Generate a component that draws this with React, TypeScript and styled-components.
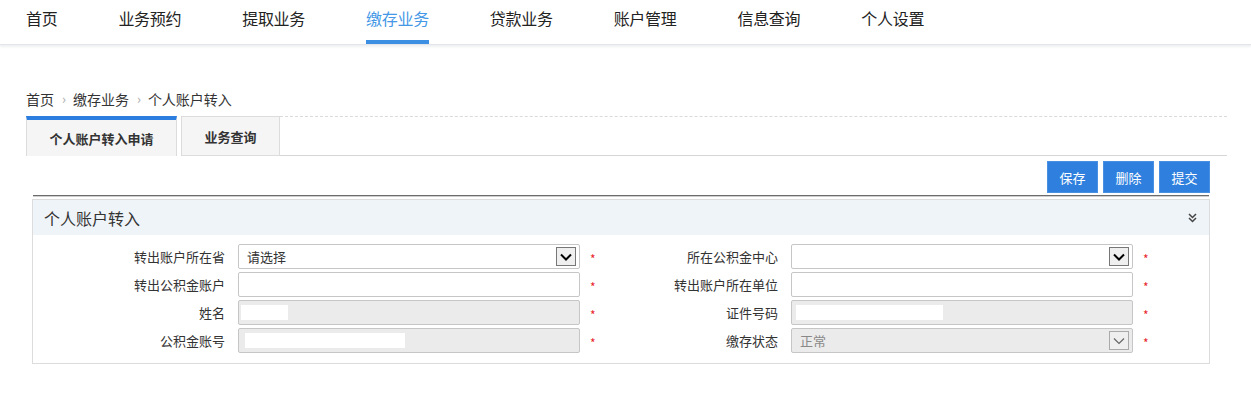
import styled, { createGlobalStyle } from "styled-components";

const GlobalStyle = createGlobalStyle`
  body {
    margin: 0;
    background: #fff;
    font-family: "Noto Sans CJK SC", "Liberation Sans", sans-serif;
    color: #333;
  }
`;

const navItems = ["首页", "业务预约", "提取业务", "缴存业务", "贷款业务", "账户管理", "信息查询", "个人设置"];

type Field = { label: string; kind: "select" | "text" | "readonly" | "readonlySelect"; value?: string; mask?: [number, number] };

const rows: [Field, Field][] = [
  [
    { label: "转出账户所在省", kind: "select", value: "请选择" },
    { label: "所在公积金中心", kind: "select" },
  ],
  [
    { label: "转出公积金账户", kind: "text" },
    { label: "转出账户所在单位", kind: "text" },
  ],
  [
    { label: "姓名", kind: "readonly", mask: [2, 47] },
    { label: "证件号码", kind: "readonly", mask: [4, 147] },
  ],
  [
    { label: "公积金账号", kind: "readonly", mask: [6, 160] },
    { label: "缴存状态", kind: "readonlySelect", value: "正常" },
  ],
];

const Chevron = ({ light }: { light?: boolean }) => (
  <svg width="12" height="8" viewBox="0 0 12 8">
    <path d="M1 1.5 L6 6.5 L11 1.5" fill="none" stroke={light ? "#666" : "#000"} strokeWidth={light ? 1.2 : 2} />
  </svg>
);

const DoubleDown = () => (
  <svg width="9" height="10" viewBox="0 0 9 10">
    <path d="M1 1 L4.5 4.5 L8 1 M1 5 L4.5 8.5 L8 5" fill="none" stroke="#444" strokeWidth="1.5" />
  </svg>
);

const FieldBox = ({ f }: { f: Field }) => {
  const ro = f.kind === "readonly" || f.kind === "readonlySelect";
  return (
    <Input $readonly={ro}>
      {f.mask && <Mask style={{ marginLeft: f.mask[0], width: f.mask[1] }} />}
      {f.value && <Value $muted={f.kind === "readonlySelect"}>{f.value}</Value>}
      {(f.kind === "select" || f.kind === "readonlySelect") && (
        <Arrow $light={f.kind === "readonlySelect"}>
          <Chevron light={f.kind === "readonlySelect"} />
        </Arrow>
      )}
    </Input>
  );
};

const App = () => {
  return (
    <>
      <GlobalStyle />
      <Nav>
        {navItems.map((n) => (
          <NavItem key={n} $active={n === "缴存业务"}>
            {n}
          </NavItem>
        ))}
      </Nav>
      <Main>
        <Crumbs>
          <span>首页</span>
          <Sep>›</Sep>
          <span>缴存业务</span>
          <Sep>›</Sep>
          <span>个人账户转入</span>
        </Crumbs>
        <Tabs>
          <Tab $active>个人账户转入申请</Tab>
          <Tab>业务查询</Tab>
          <TabFill />
        </Tabs>
        <Content>
          <Toolbar>
            <Button>保存</Button>
            <Button>删除</Button>
            <Button>提交</Button>
          </Toolbar>
          <Divider />
          <Panel>
            <PanelHead>
              <PanelTitle>个人账户转入</PanelTitle>
              <DoubleDown />
            </PanelHead>
            <FormGrid>
              {rows.map((r, i) =>
                r.map((f, j) => (
                  <FieldRow key={`${i}-${j}`} $right={j === 1}>
                    <Label>{f.label}</Label>
                    <FieldBox f={f} />
                    <Star>*</Star>
                  </FieldRow>
                ))
              )}
            </FormGrid>
          </Panel>
        </Content>
      </Main>
    </>
  );
};

const Nav = styled.div`
  display: flex;
  gap: 61px;
  padding-left: 26px;
  height: 44px;
  border-bottom: 1px solid #e3e5e9;
  box-shadow: 0 2px 2px #eef0f3;
`;
const NavItem = styled.div<{ $active?: boolean }>`
  font-size: 16px;
  line-height: 36px;
  color: ${(p) => (p.$active ? "#4498e6" : "#222")};
  border-bottom: 4px solid ${(p) => (p.$active ? "#3c8fe2" : "transparent")};
  letter-spacing: -0.3px;
`;
const Main = styled.div`
  margin: 0 24px 0 26px;
  padding-top: 44px;
`;
const Crumbs = styled.div`
  display: flex;
  align-items: center;
  font-size: 14px;
  line-height: 20px;
  color: #333;
  margin-bottom: 7px;
`;
const Sep = styled.span`
  color: #aaa;
  margin: 0 7px 0 8px;
  font-size: 13px;
`;
const Tabs = styled.div`
  display: flex;
  height: 40px;
  align-items: stretch;
`;
const Tab = styled.div<{ $active?: boolean }>`
  box-sizing: border-box;
  width: ${(p) => (p.$active ? "151px" : "99px")};
  margin-right: ${(p) => (p.$active ? "4px" : "0")};
  background: #f5f5f5;
  border: 1px solid #dcdcdc;
  border-top: ${(p) => (p.$active ? "4px solid #2b7de0" : "1px solid #dcdcdc")};
  border-bottom: ${(p) => (p.$active ? "none" : "1px solid #dcdcdc")};
  font-size: 13px;
  font-weight: bold;
  color: #333;
  display: flex;
  align-items: center;
  justify-content: center;
`;
const TabFill = styled.div`
  flex: 1;
  border-top: 1px dashed #dadada;
  border-bottom: 1px solid #d6d6d6;
`;
const Content = styled.div`
  padding: 0 17px 0 6px;
`;
const Toolbar = styled.div`
  display: flex;
  justify-content: flex-end;
  gap: 5px;
  margin-top: 5px;
`;
const Button = styled.div`
  width: 51px;
  height: 32px;
  background: #2f80de;
  border: 1px solid #4a90e2;
  box-sizing: border-box;
  color: #fff;
  font-size: 13px;
  display: flex;
  align-items: center;
  justify-content: center;
`;
const Divider = styled.div`
  margin: 2px 1px 0;
  height: 2px;
  background: #6b6b6b;
  border-bottom: 1px solid #cfcfcf;
  box-sizing: border-box;
`;
const Panel = styled.div`
  margin-top: 2px;
  border: 1px solid #dcdcdc;
`;
const PanelHead = styled.div`
  height: 35px;
  background: #eff4f8;
  display: flex;
  align-items: center;
  justify-content: space-between;
  padding: 0 12px 0 11px;
`;
const PanelTitle = styled.div`
  font-size: 16px;
  color: #333;
`;
const FormGrid = styled.div`
  display: grid;
  grid-template-columns: 588px 1fr;
  row-gap: 3px;
  padding: 9px 0 10px;
`;
const FieldRow = styled.div<{ $right?: boolean }>`
  display: grid;
  grid-template-columns: ${(p) => (p.$right ? "170px" : "205px")} 342px 1fr;
  align-items: center;
`;
const Label = styled.div`
  text-align: right;
  padding-right: 13px;
  font-size: 13px;
  color: #333;
`;
const Input = styled.div<{ $readonly?: boolean }>`
  height: 25px;
  box-sizing: border-box;
  border: 1px solid #c6c6c6;
  border-radius: 2px;
  background: ${(p) => (p.$readonly ? "#ebebeb" : "#fff")};
  display: flex;
  align-items: center;
  position: relative;
`;
const Mask = styled.div`
  height: 15px;
  background: #fff;
`;
const Value = styled.span<{ $muted?: boolean }>`
  padding-left: 8px;
  font-size: 13px;
  color: ${(p) => (p.$muted ? "#888" : "#333")};
`;
const Arrow = styled.div<{ $light?: boolean }>`
  position: absolute;
  right: 3px;
  top: 2px;
  width: 20px;
  height: 19px;
  box-sizing: border-box;
  border: 1px solid ${(p) => (p.$light ? "#aaa" : "#777")};
  background: #efefef;
  display: flex;
  align-items: center;
  justify-content: center;
`;
const Star = styled.div`
  color: #e8262b;
  font-size: 12px;
  padding-left: 10px;
  padding-top: 3px;
`;

export default App;
